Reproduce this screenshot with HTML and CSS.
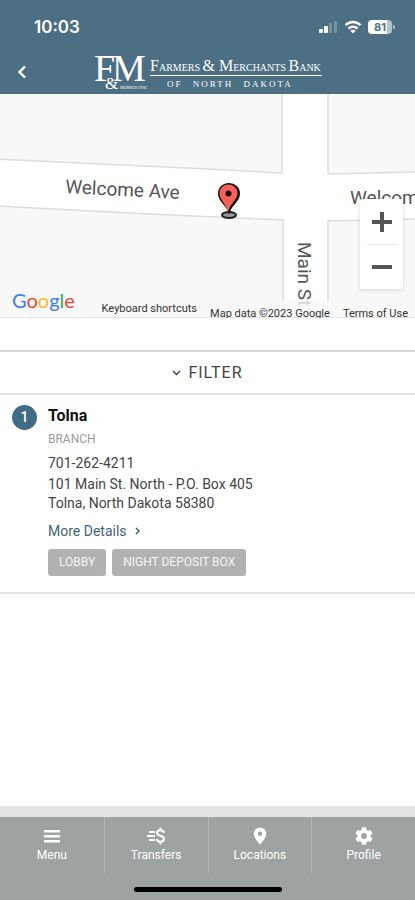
FILE: index.html
```html
<!DOCTYPE html>
<html lang="en">
<head>
<meta charset="utf-8">
<title>Locations</title>
<meta name="viewport" content="width=device-width, initial-scale=1.0">
<link rel="stylesheet" href="styles.css">
</head>
<body>
<header class="top">
  <div class="status-bar">
    <span class="time">10:03</span>
    <div class="status-icons">
      <svg width="19" height="14" viewBox="0 0 19 14" fill="#fff">
        <rect x="0" y="9" width="4" height="4" rx="1"/>
        <rect x="5" y="6" width="4" height="7" rx="1"/>
        <rect x="10" y="3" width="3" height="10" rx="1" opacity=".25"/>
        <rect x="15" y="1" width="3" height="12" rx="1" opacity=".25"/>
      </svg>
      <svg width="18" height="14" viewBox="0 0 18 14" fill="none" stroke="#fff" stroke-width="2.4">
        <path d="M1.5 5.2C6 .9 12 .9 16.500 5.200"/>
        <path d="M4.500 8.500C7.200 6 10.800 6 13.500 8.500"/>
        <path d="M9 13.500 6.400 10.800C7.800 9.500 10.200 9.500 11.600 10.800Z" fill="#fff" stroke="none"/>
      </svg>
      <span class="battery">81</span>
    </div>
  </div>
  <div class="title-bar">
    <button class="back" aria-label="Back">
      <svg width="10" height="14" viewBox="0 0 10 14" fill="none" stroke="#fff" stroke-width="2.4"><path d="M8 1.500 2.500 7 8 12.500"/></svg>
    </button>
    <svg class="logo" width="230" height="38" viewBox="0 0 230 38" fill="#fff" role="img" aria-label="Farmers and Merchants Bank of North Dakota">
      <text x="1" y="27" font-size="38">F</text>
      <text x="19" y="27" font-size="38">M</text>
      <text x="12" y="35" font-size="17" class="logo-amp">&amp;</text>
      <text x="27" y="35" font-size="4">MEMBER FDIC</text>
      <text x="57" y="17" font-size="10"><tspan font-size="16">F</tspan>ARMERS <tspan font-size="16">&amp; M</tspan>ERCHANTS <tspan font-size="16">B</tspan>ANK</text>
      <rect x="57" y="21" width="172" height="1"/>
      <text x="74" y="33" font-size="9" class="logo-sub">OF NORTH DAKOTA</text>
    </svg>
  </div>
</header>

<div class="map">
  <svg class="map-canvas" viewBox="0 0 415 224" preserveAspectRatio="xMidYMid slice">
    <rect width="415" height="224" fill="#fff"/>
    <!-- city blocks, the roads are the gaps between them -->
    <g fill="#f8f8f8" stroke="#dcdcdc" stroke-width="1.500">
      <path d="M-5-5H282V79L208 75-5 65Z"/>
      <path d="M328-5H420V78L328 80Z"/>
      <path d="M-5 112 150 120 283 126V230H-5Z"/>
      <path d="M328 127 420 125V230H328Z"/>
    </g>
    <text x="65" y="99" transform="rotate(3 65 99)">Welcome Ave</text>
    <text x="350" y="110">Welcome Ave</text>
    <text x="298" y="148" transform="rotate(90 298 148)">Main St</text>
    <!-- pin -->
    <ellipse cx="229" cy="121" rx="7" ry="3" fill="#999" stroke="#222" stroke-width="2"/>
    <path d="M229 121C227 111 218 108 218 99.500a11 10.500 0 0 1 22 0C240 108 231 111 229 121Z" fill="#111"/>
    <path d="M228 118C226 109 219.500 106 219.500 99a9 8.500 0 0 1 18 0C237.500 106 230 109 228 118Z" fill="#fb6158"/>
    <circle cx="228.500" cy="99.500" r="3" fill="#111"/>
  </svg>
  <div class="zoom">
    <button aria-label="Zoom in"><svg width="20" height="20" viewBox="0 0 20 20" fill="#555"><path d="M8 0h4v8h8v4h-8v8H8v-8H0V8h8Z"/></svg></button>
    <button aria-label="Zoom out"><svg width="20" height="20" viewBox="0 0 20 20" fill="#555"><path d="M0 8h20v4H0Z"/></svg></button>
  </div>
  <div class="map-footer">
    <a href="#" class="google"><span class="blue">G</span><span class="red">o</span><span class="yellow">o</span><span class="blue">g</span><span class="green">l</span><span class="red">e</span></a>
    <button class="shortcuts">Keyboard shortcuts</button>
    <span class="map-data">Map data ©2023 Google</span>
    <a href="#" class="terms">Terms of Use</a>
  </div>
</div>

<button class="filter">
  <svg width="9" height="6" viewBox="0 0 9 6" fill="none" stroke="#444" stroke-width="1.500"><path d="M1 1l3.500 3.500L8 1"/></svg>
  FILTER
</button>

<main class="locations">
  <div class="location">
    <span class="number">1</span>
    <div class="details">
      <h2>Tolna</h2>
      <p class="type">BRANCH</p>
      <p class="phone">701-262-4211</p>
      <p class="address">101 Main St. North - P.O. Box 405<br>Tolna, North Dakota 58380</p>
      <a href="#" class="more">More Details
        <svg width="6" height="8" viewBox="0 0 6 8" fill="none" stroke="#3f6478" stroke-width="1.500"><path d="M1 1l3 3-3 3"/></svg>
      </a>
      <div class="tags">
        <span>LOBBY</span>
        <span>NIGHT DEPOSIT BOX</span>
      </div>
    </div>
  </div>
</main>

<nav class="bottom">
  <div class="tabs">
    <a href="#">
      <svg width="20" height="20" viewBox="0 0 20 20" fill="#fff"><path d="M2 4h16v2.500H2ZM2 9h16v2.500H2ZM2 14h16v2.500H2Z"/></svg>
      Menu
    </a>
    <a href="#">
      <svg width="20" height="20" viewBox="0 0 20 20" fill="none" stroke="#fff" stroke-width="2"><path d="M3 6h6M1 10h8M3 14h6"/><path d="M18 6.800C17.500 5 16 4.300 14.300 4.300 12.300 4.300 11 5.400 11 7 11 10.500 18 9 18 13c0 1.700-1.500 2.800-3.500 2.800S11 14.800 10.600 13M14.400 1.500v3M14.400 15.500v3"/></svg>
      Transfers
    </a>
    <a href="#">
      <svg width="20" height="20" viewBox="0 0 20 20" fill="#fff" fill-rule="evenodd"><path d="M10 1.500A6.200 6.200 0 0 0 3.800 7.700C3.800 12.300 10 18.500 10 18.500S16.200 12.300 16.200 7.700A6.200 6.200 0 0 0 10 1.500ZM10 5.500a2.200 2.200 0 1 1 0 4.400 2.200 2.200 0 0 1 0-4.400Z"/></svg>
      Locations
    </a>
    <a href="#">
      <svg width="20" height="20" viewBox="1 1 22 22" fill="#fff"><path d="M19.140 12.940c.04-.3.060-.61.060-.94 0-.32-.02-.64-.07-.94l2.030-1.580c.18-.14.230-.41.120-.61l-1.920-3.320c-.12-.22-.37-.29-.59-.22l-2.390.96c-.5-.38-1.030-.7-1.620-.94l-.36-2.540c-.04-.24-.24-.41-.48-.41h-3.840c-.24 0-.43.170-.47.410l-.36 2.540c-.59.240-1.130.570-1.620.940l-2.390-.96c-.22-.08-.47 0-.59.220L2.740 8.870c-.12.210-.08.470.120.610l2.030 1.580c-.05.300-.09.630-.09.940s.02.640.070.940l-2.030 1.580c-.18.140-.23.410-.12.610l1.920 3.320c.12.220.370.290.590.220l2.390-.96c.5.380 1.030.7 1.620.940l.36 2.540c.05.240.240.410.480.410h3.840c.24 0 .44-.17.470-.41l.36-2.540c.59-.24 1.130-.56 1.620-.94l2.390.96c.22.080.470 0 .59-.22l1.920-3.320c.12-.22.070-.47-.12-.61l-2.010-1.580zM12 15.200a3.200 3.200 0 1 1 0-6.400 3.200 3.200 0 0 1 0 6.400z"/></svg>
      Profile
    </a>
  </div>
  <div class="home-indicator"></div>
</nav>
</body>
</html>
```
FILE: styles.css
```css
* {
  padding: 0;
  margin: 0;
  box-sizing: border-box;
}

body {
  min-height: 100vh;
  display: flex;
  flex-direction: column;
  background-color: #fff;
  color: #444;
  font-family: Roboto, sans-serif;
  font-size: 14px;
}

button {
  border: none;
  background: none;
  font-family: inherit;
  color: inherit;
  cursor: pointer;
}

a {
  color: inherit;
  text-decoration: none;
}

svg {
  display: block;
}

/* Header */
.top {
  background-color: #4c6f84;
  color: #fff;
}

.status-bar {
  display: flex;
  justify-content: space-between;
  align-items: center;
  height: 54px;
  padding: 0 20px 0 34px;
}

.time {
  font-family: Inter, sans-serif;
  font-size: 17px;
  font-weight: 600;
}

.status-icons {
  display: flex;
  align-items: center;
  gap: 6px;
}

.battery {
  position: relative;
  width: 24px;
  height: 14px;
  margin-right: 3px;
  border-radius: 4px;
  background: linear-gradient(to right, #fff 81%, #b4c3cc 81%);
  color: #4c6f84;
  font-family: Inter, sans-serif;
  font-size: 11px;
  font-weight: 700;
  line-height: 14px;
  text-align: center;
}

.battery::after {
  content: "";
  position: absolute;
  top: 5px;
  right: -3px;
  width: 2px;
  height: 4px;
  border-radius: 0 2px 2px 0;
  background-color: #b4c3cc;
}

.title-bar {
  display: grid;
  grid-template-columns: 44px 1fr 44px;
  justify-items: center;
  height: 40px;
}

.back {
  width: 44px;
  height: 36px;
  display: flex;
  align-items: center;
  justify-content: center;
}

.logo {
  overflow: visible;
  font-family: "Liberation Serif", serif;
}

.logo-amp {
  stroke: #4c6f84;
  stroke-width: 2px;
  paint-order: stroke;
}

.logo-sub {
  letter-spacing: 2px;
  word-spacing: 6px;
}

/* Map */
.map {
  position: relative;
  height: 224px;
  overflow: hidden;
}

.map-canvas {
  width: 100%;
  height: 100%;
  fill: #555;
  font-size: 19px;
}

.zoom {
  position: absolute;
  top: 105px;
  right: 12px;
  width: 43px;
  padding: 0 7px;
  background-color: #fff;
  border-radius: 2px;
  box-shadow: 0 1px 4px rgba(0, 0, 0, 0.15);
}

.zoom button {
  display: flex;
  align-items: center;
  justify-content: center;
  width: 100%;
  height: 45px;
}

.zoom button + button {
  border-top: 1px solid #e6e6e6;
}

.map-footer {
  position: absolute;
  left: 0;
  right: 0;
  bottom: 0;
  display: flex;
  gap: 13px;
  height: 18px;
  padding: 0 7px 0 12px;
  border-bottom: 1px solid #e2e2e2;
  background-color: rgba(248, 248, 248, 0.8);
  color: #333;
  font-size: 11px;
  line-height: 18px;
  white-space: nowrap;
}

.google {
  margin-top: -12px;
  margin-right: auto;
  font-family: Lato, sans-serif;
  font-size: 20px;
  line-height: 24px;
}

.blue { color: #3b7ded; }
.red { color: #e5453a; }
.yellow { color: #f7bb16; }
.green { color: #36a853; }

.shortcuts {
  font-size: 11px;
  line-height: 18px;
}

.map-data,
.terms {
  line-height: 28px;
}

/* Filter */
.filter {
  display: flex;
  align-items: center;
  justify-content: center;
  gap: 7px;
  height: 45px;
  margin-top: 32px;
  border-top: 2px solid #d6d6d6;
  border-bottom: 2px solid #e2e2e2;
  font-size: 16px;
  letter-spacing: 1px;
}

/* Locations */
.locations {
  flex-grow: 1;
}

.location {
  display: flex;
  gap: 11px;
  padding: 10px 12px 16px;
  border-bottom: 2px solid #e2e2e2;
}

.number {
  flex-shrink: 0;
  width: 25px;
  height: 25px;
  border-radius: 50%;
  background-color: #3f6c86;
  color: #fff;
  font-weight: 500;
  line-height: 25px;
  text-align: center;
}

.details h2 {
  color: #111;
  font-size: 16px;
  font-weight: 700;
  line-height: 22px;
}

.type {
  color: #999;
  font-size: 12px;
  line-height: 25px;
}

.phone {
  line-height: 22px;
}

.address {
  line-height: 19px;
  padding-top: 1px;
}

.more {
  display: flex;
  align-items: center;
  gap: 8px;
  padding: 8px 0;
  color: #3f6478;
  line-height: 20px;
}

.tags {
  display: flex;
  gap: 6px;
}

.tags span {
  padding: 0 11px;
  border-radius: 3px;
  background-color: #b1b1b1;
  color: #f4f4f4;
  font-size: 12px;
  line-height: 27px;
}

/* Bottom tabs */
.bottom {
  padding-bottom: 8px;
  border-top: 11px solid #e2e4e3;
  background-color: #9da2a3;
  color: #fff;
}

.tabs {
  display: grid;
  grid-template-columns: repeat(4, 1fr);
}

.tabs a {
  display: flex;
  flex-direction: column;
  align-items: center;
  height: 56px;
  padding-top: 9px;
  font-size: 12px;
  line-height: 18px;
}

.tabs a + a {
  border-left: 1px solid #b0b4b5;
}

.home-indicator {
  width: 148px;
  height: 5px;
  margin: 14px auto 0;
  border-radius: 3px;
  background-color: #000;
}
```
